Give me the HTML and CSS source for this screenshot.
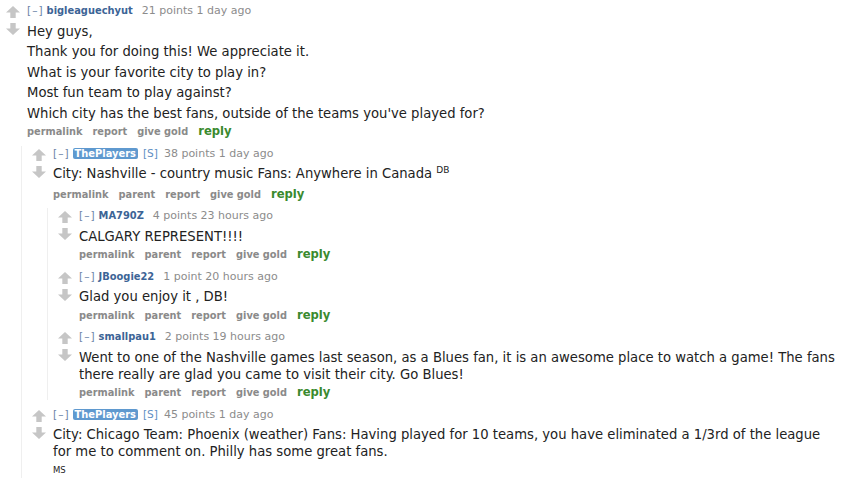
FILE: index.html
```html
<!DOCTYPE html>
<html>
<head>
<meta charset="utf-8">
<link rel="stylesheet" href="styles.css">
</head>
<body>
<div class="page">

<div class="comment">
  <div class="row">
    <div class="midcol">
      <svg class="arrow" viewBox="0 0 13 11"><polygon points="6.5,0 13,6 9,6 9,11 4,11 4,6 0,6"/></svg>
      <svg class="arrow down" viewBox="0 0 13 11"><polygon points="6.5,11 13,5 9,5 9,0 4,0 4,5 0,5"/></svg>
    </div>
    <div class="entry">
      <p class="tagline"><span class="expand">[–]</span><span class="author">bigleaguechyut</span><span class="score">21 points 1 day ago</span></p>
      <div class="md">
        <p>Hey guys,</p>
        <p>Thank you for doing this! We appreciate it.</p>
        <p>What is your favorite city to play in?</p>
        <p>Most fun team to play against?</p>
        <p>Which city has the best fans, outside of the teams you've played for?</p>
      </div>
      <ul class="buttons"><li>permalink</li><li>report</li><li>give gold</li><li class="reply">reply</li></ul>
    </div>
  </div>

  <div class="child">
    <div class="comment">
      <div class="row">
        <div class="midcol">
          <svg class="arrow" viewBox="0 0 13 11"><polygon points="6.5,0 13,6 9,6 9,11 4,11 4,6 0,6"/></svg>
          <svg class="arrow down" viewBox="0 0 13 11"><polygon points="6.5,11 13,5 9,5 9,0 4,0 4,5 0,5"/></svg>
        </div>
        <div class="entry">
          <p class="tagline"><span class="expand">[–]</span><span class="author submitter">ThePlayers</span><span class="flag">[S]</span><span class="score">38 points 1 day ago</span></p>
          <div class="md">
            <p class="signed">City: Nashville - country music Fans: Anywhere in Canada <sup>DB</sup></p>
          </div>
          <ul class="buttons"><li>permalink</li><li>parent</li><li>report</li><li>give gold</li><li class="reply">reply</li></ul>
        </div>
      </div>

      <div class="child">
        <div class="comment">
          <div class="row">
            <div class="midcol">
              <svg class="arrow" viewBox="0 0 13 11"><polygon points="6.5,0 13,6 9,6 9,11 4,11 4,6 0,6"/></svg>
              <svg class="arrow down" viewBox="0 0 13 11"><polygon points="6.5,11 13,5 9,5 9,0 4,0 4,5 0,5"/></svg>
            </div>
            <div class="entry">
              <p class="tagline"><span class="expand">[–]</span><span class="author">MA790Z</span><span class="score">4 points 23 hours ago</span></p>
              <div class="md">
                <p>CALGARY REPRESENT!!!!</p>
              </div>
              <ul class="buttons"><li>permalink</li><li>parent</li><li>report</li><li>give gold</li><li class="reply">reply</li></ul>
            </div>
          </div>
        </div>

        <div class="comment">
          <div class="row">
            <div class="midcol">
              <svg class="arrow" viewBox="0 0 13 11"><polygon points="6.5,0 13,6 9,6 9,11 4,11 4,6 0,6"/></svg>
              <svg class="arrow down" viewBox="0 0 13 11"><polygon points="6.5,11 13,5 9,5 9,0 4,0 4,5 0,5"/></svg>
            </div>
            <div class="entry">
              <p class="tagline"><span class="expand">[–]</span><span class="author">JBoogie22</span><span class="score">1 point 20 hours ago</span></p>
              <div class="md">
                <p>Glad you enjoy it , DB!</p>
              </div>
              <ul class="buttons"><li>permalink</li><li>parent</li><li>report</li><li>give gold</li><li class="reply">reply</li></ul>
            </div>
          </div>
        </div>

        <div class="comment">
          <div class="row">
            <div class="midcol">
              <svg class="arrow" viewBox="0 0 13 11"><polygon points="6.5,0 13,6 9,6 9,11 4,11 4,6 0,6"/></svg>
              <svg class="arrow down" viewBox="0 0 13 11"><polygon points="6.5,11 13,5 9,5 9,0 4,0 4,5 0,5"/></svg>
            </div>
            <div class="entry">
              <p class="tagline"><span class="expand">[–]</span><span class="author">smallpau1</span><span class="score">2 points 19 hours ago</span></p>
              <div class="md">
                <p>Went to one of the Nashville games last season, as a Blues fan, it is an awesome place to watch a game! The fans there really are glad you came to visit their city. Go Blues!</p>
              </div>
              <ul class="buttons"><li>permalink</li><li>parent</li><li>report</li><li>give gold</li><li class="reply">reply</li></ul>
            </div>
          </div>
        </div>
      </div>
    </div>

    <div class="comment">
      <div class="row">
        <div class="midcol">
          <svg class="arrow" viewBox="0 0 13 11"><polygon points="6.5,0 13,6 9,6 9,11 4,11 4,6 0,6"/></svg>
          <svg class="arrow down" viewBox="0 0 13 11"><polygon points="6.5,11 13,5 9,5 9,0 4,0 4,5 0,5"/></svg>
        </div>
        <div class="entry">
          <p class="tagline"><span class="expand">[–]</span><span class="author submitter">ThePlayers</span><span class="flag">[S]</span><span class="score">45 points 1 day ago</span></p>
          <div class="md">
            <p>City: Chicago Team: Phoenix (weather) Fans: Having played for 10 teams, you have eliminated a 1/3rd of the league for me to comment on. Philly has some great fans.</p>
            <p class="small">MS</p>
          </div>
        </div>
      </div>
    </div>
  </div>
</div>

</div>
</body>
</html>
```

FILE: styles.css
```css
html, body {
  margin: 0;
  padding: 0;
  background: #ffffff;
}

.page {
  padding: 3px 0 0 6px;
  font-family: "DejaVu Sans", Verdana, sans-serif;
  color: #222222;
}

.row {
  display: flex;
  align-items: flex-start;
}

.midcol {
  flex: 0 0 14px;
  margin-right: 7px;
  padding-top: 3px;
  display: flex;
  flex-direction: column;
  gap: 5px;
}

.arrow {
  display: block;
  width: 14px;
  height: 12px;
  fill: #c6c6c6;
}

.entry {
  flex: 1;
  min-width: 0;
  padding-right: 10px;
}

.tagline {
  margin: 0;
  font-size: 11px;
  line-height: 14px;
  color: #8c8c8c;
  white-space: nowrap;
}

.expand {
  color: #6d84a8;
  font-size: 10.6px;
  letter-spacing: 1px;
  margin-right: 3px;
}

.author {
  color: #3c6496;
  font-weight: bold;
  font-size: 9.9px;
  margin-right: 9px;
}

.author.submitter {
  background: #5f99cf;
  color: #ffffff;
  padding: 0 2px;
  margin-right: 5px;
  border-radius: 2px;
}

.flag {
  color: #5f8fc4;
  font-size: 10.6px;
  margin-right: 6px;
}

.md {
  padding: 1px 0 0;
}

.md p {
  margin: 3.5px 0;
  font-size: 13.2px;
  line-height: 17px;
}

.md sup {
  font-size: 9px;
  line-height: 1;
  vertical-align: 5px;
}

.md p.signed {
  padding-bottom: 2px;
}

.md p.small {
  font-size: 8.5px;
  line-height: 14px;
  margin-top: -1px;
}

.buttons {
  list-style: none;
  margin: -1px 0 0;
  padding: 0;
  display: flex;
  align-items: baseline;
  gap: 10px;
  font-size: 9.8px;
  line-height: 15px;
  font-weight: bold;
  color: #8a8a8a;
}

.buttons .reply {
  color: #3a8a2e;
  font-size: 11.6px;
}

.child {
  margin-left: 15px;
  margin-top: 6.5px;
  padding-left: 10px;
  border-left: 1px solid #efefef;
}

.child > .comment + .comment {
  margin-top: 6.5px;
}
```
